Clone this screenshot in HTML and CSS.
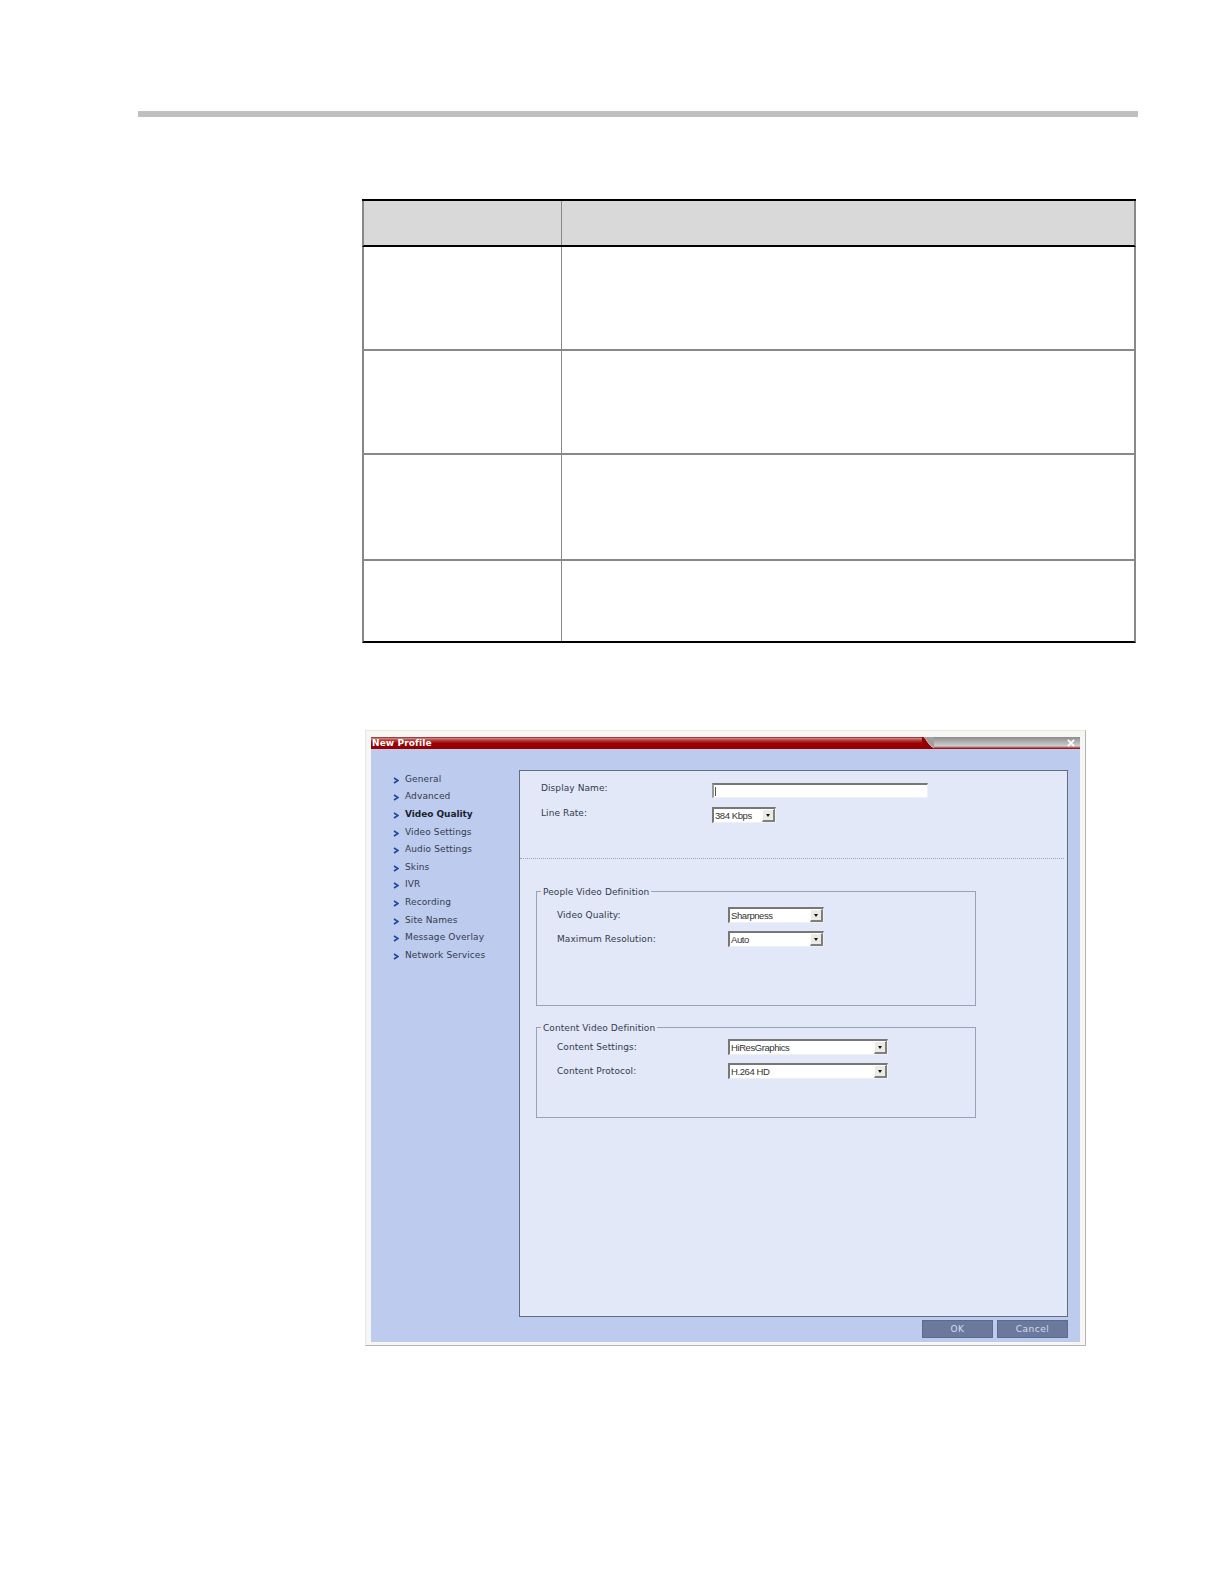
FILE: index.html
```html
<!DOCTYPE html>
<html lang="en">
<head>
<meta charset="utf-8">
<title>New Profile</title>
<link rel="stylesheet" href="styles.css">
</head>
<body>
<div class="rule"></div>
<div class="spec">
  <div class="spec-row spec-head"><div class="spec-a"></div><div class="spec-b"></div></div>
  <div class="spec-row h-104"><div class="spec-a"></div><div class="spec-b"></div></div>
  <div class="spec-row h-104"><div class="spec-a"></div><div class="spec-b"></div></div>
  <div class="spec-row h-106"><div class="spec-a"></div><div class="spec-b"></div></div>
  <div class="spec-row h-82 spec-last"><div class="spec-a"></div><div class="spec-b"></div></div>
</div>
<div class="frame">
  <div class="dialog">
    <div class="titlebar">
      <div class="title-red"><span class="title-text">New Profile</span></div>
      <svg class="title-notch" viewBox="0 0 12 12" preserveAspectRatio="none" aria-hidden="true">
        <path d="M0 0H2C5 3 7 9 12 11V12H0Z" fill="#960000"/>
        <path d="M2 0C5 3 7 9 12 11" stroke="#e3b0b0" stroke-width="1" fill="none"/>
      </svg>
      <div class="title-grey"><svg class="close" viewBox="0 0 9 9" aria-hidden="true"><path d="M1 1L8 8M8 1L1 8" stroke="#fff" stroke-width="2"/></svg></div>
    </div>
    <div class="dialog-body">
      <ul class="nav">
        <li class="nav-item"><svg class="chev" viewBox="0 0 6 7"><path d="M1 1L5 3.5L1 6" stroke="#1a469c" stroke-width="1.6" fill="none"/></svg>General</li>
        <li class="nav-item"><svg class="chev" viewBox="0 0 6 7"><path d="M1 1L5 3.5L1 6" stroke="#1a469c" stroke-width="1.6" fill="none"/></svg>Advanced</li>
        <li class="nav-item nav-active"><svg class="chev" viewBox="0 0 6 7"><path d="M1 1L5 3.5L1 6" stroke="#1a469c" stroke-width="1.6" fill="none"/></svg>Video Quality</li>
        <li class="nav-item"><svg class="chev" viewBox="0 0 6 7"><path d="M1 1L5 3.5L1 6" stroke="#1a469c" stroke-width="1.6" fill="none"/></svg>Video Settings</li>
        <li class="nav-item"><svg class="chev" viewBox="0 0 6 7"><path d="M1 1L5 3.5L1 6" stroke="#1a469c" stroke-width="1.6" fill="none"/></svg>Audio Settings</li>
        <li class="nav-item"><svg class="chev" viewBox="0 0 6 7"><path d="M1 1L5 3.5L1 6" stroke="#1a469c" stroke-width="1.6" fill="none"/></svg>Skins</li>
        <li class="nav-item"><svg class="chev" viewBox="0 0 6 7"><path d="M1 1L5 3.5L1 6" stroke="#1a469c" stroke-width="1.6" fill="none"/></svg>IVR</li>
        <li class="nav-item"><svg class="chev" viewBox="0 0 6 7"><path d="M1 1L5 3.5L1 6" stroke="#1a469c" stroke-width="1.6" fill="none"/></svg>Recording</li>
        <li class="nav-item"><svg class="chev" viewBox="0 0 6 7"><path d="M1 1L5 3.5L1 6" stroke="#1a469c" stroke-width="1.6" fill="none"/></svg>Site Names</li>
        <li class="nav-item"><svg class="chev" viewBox="0 0 6 7"><path d="M1 1L5 3.5L1 6" stroke="#1a469c" stroke-width="1.6" fill="none"/></svg>Message Overlay</li>
        <li class="nav-item"><svg class="chev" viewBox="0 0 6 7"><path d="M1 1L5 3.5L1 6" stroke="#1a469c" stroke-width="1.6" fill="none"/></svg>Network Services</li>
      </ul>
      <div class="main">
        <div class="panel">
          <div class="panel-top">
            <div class="form-row"><span class="label">Display Name:</span><div class="textbox"><span class="caret"></span></div></div>
            <div class="form-row"><span class="label label-low">Line Rate:</span><div class="combo w-64"><span class="combo-text">384 Kbps</span><span class="combo-btn"></span></div></div>
          </div>
          <fieldset class="group group-people">
            <legend class="group-title">People Video Definition</legend>
            <div class="form-row"><span class="label">Video Quality:</span><div class="combo w-96"><span class="combo-text">Sharpness</span><span class="combo-btn"></span></div></div>
            <div class="form-row"><span class="label">Maximum Resolution:</span><div class="combo w-96"><span class="combo-text">Auto</span><span class="combo-btn"></span></div></div>
          </fieldset>
          <fieldset class="group group-content">
            <legend class="group-title">Content Video Definition</legend>
            <div class="form-row"><span class="label">Content Settings:</span><div class="combo w-160"><span class="combo-text">HiResGraphics</span><span class="combo-btn"></span></div></div>
            <div class="form-row"><span class="label">Content Protocol:</span><div class="combo w-160"><span class="combo-text">H.264 HD</span><span class="combo-btn"></span></div></div>
          </fieldset>
        </div>
        <div class="actions">
          <button class="btn" type="button">OK</button>
          <button class="btn" type="button">Cancel</button>
        </div>
      </div>
    </div>
  </div>
</div>
</body>
</html>
```
FILE: styles.css
```css
* { box-sizing: border-box; }
html, body { margin: 0; padding: 0; background: #fff; }
body { height: 1584px; overflow: hidden; font-family: "DejaVu Sans", sans-serif; }

.rule { height: 6px; margin: 111px 86px 0 138px; background: #c0c0c0; }

.spec { width: 774px; margin: 82px 0 0 362px; border-top: 2px solid #000; }
.spec-row { display: flex; border-bottom: 2px solid #888; border-left: 2px solid #888; border-right: 2px solid #888; }
.spec-head { height: 46px; background: #d9d9d9; border-bottom-color: #000; }
.h-104 { height: 104px; }
.h-106 { height: 106px; }
.h-82 { height: 82px; }
.spec-last { border-bottom-color: #000; }
.spec-a { width: 197px; }
.spec-b { flex: 1; border-left: 1px solid #888; }

.frame { width: 721px; height: 616px; margin: 87px 0 0 365px; padding: 6px 5px 3px 5px; background: #f6f6f3; border: 1px solid #e6e6e6; border-right-color: #b4b4b4; border-bottom-color: #b4b4b4; }
.dialog { height: 100%; display: flex; flex-direction: column; background: #bdcbee; }

.titlebar { display: flex; height: 12px; flex: none; }
.title-red { width: 551px; background: linear-gradient(#8e1a1a 0, #c98080 12%, #b33 30%, #960000 55%, #960000 100%); }
.title-text { display: block; padding-left: 1px; font-size: 9px; line-height: 12px; font-weight: 700; letter-spacing: 0.1px; color: #fff; }
.title-notch { width: 12px; height: 12px; background: #a0a0a0; flex: none; }
.title-grey { flex: 1; display: flex; justify-content: flex-end; align-items: center; padding-right: 5px; background: linear-gradient(#8c8c8c, #d0d0d0 75%, #a33 92%, #960000); }
.close { width: 8px; height: 8px; }

.dialog-body { flex: 1; display: flex; min-height: 0; }
.nav { width: 148px; flex: none; margin: 0; padding: 21px 0 0 22px; list-style: none; }
.nav-item { display: flex; align-items: center; height: 17.6px; font-size: 9px; letter-spacing: 0.12px; color: #333a4a; }
.nav-active { font-weight: 700; color: #1a1f2c; letter-spacing: -0.05px; }
.chev { width: 6px; height: 7px; margin: 3px 6px 0 0; flex: none; }

.main { flex: 1; display: flex; flex-direction: column; padding: 21px 12px 0 0; }
.panel { height: 547px; background: #e2e8f8; border: 1px solid #5f6f7c; }
.panel-top { height: 88px; margin-right: 3px; padding: 12px 0 0 21px; display: flex; flex-direction: column; gap: 9px; border-bottom: 1px dotted #99a2b4; }

.form-row { display: flex; align-items: center; height: 15px; }
.panel-top .form-row { align-items: flex-start; }
.label { width: 171px; flex: none; font-size: 9px; line-height: 11px; letter-spacing: 0.08px; color: #333a4a; }
.label-low { padding-top: 1px; }
.textbox { display: flex; align-items: center; width: 216px; height: 15px; padding-left: 1px; background: #fff; border-top: 2px solid #777; border-left: 2px solid #999; border-right: 1px solid #eef0f4; border-bottom: 1px solid #eef0f4; }
.caret { width: 1px; height: 9px; background: #555; }

.combo { display: flex; align-items: stretch; height: 16px; background: #fff; border-top: 2px solid #777; border-left: 2px solid #777; border-right: 1px solid #eef0f4; border-bottom: 1px solid #eef0f4; }
.w-64 { width: 64px; }
.w-96 { width: 96px; }
.w-160 { width: 160px; }
.combo-text { flex: 1; padding-left: 1px; font-family: "Liberation Sans", sans-serif; font-size: 9.5px; line-height: 13px; letter-spacing: -0.42px; color: #333; white-space: nowrap; overflow: hidden; }
.combo-btn { position: relative; width: 13px; flex: none; background: #eceae4; border-top: 1px solid #fff; border-left: 1px solid #fff; border-right: 2px solid #808080; border-bottom: 2px solid #808080; }
.combo-btn::after { content: ""; position: absolute; left: 3px; top: 4px; border-style: solid; border-width: 3px 2.5px 0 2.5px; border-color: #111 transparent transparent transparent; }

.group { margin: 0 0 0 16px; width: 440px; padding: 0 0 0 20px; border: 1px solid #98a2b5; display: flex; flex-direction: column; gap: 8px; }
.group .form-row { height: 16px; }
.group-title { margin-left: -16px; padding: 2px 2px 0; font-size: 9px; line-height: 12px; letter-spacing: 0.08px; color: #333a4a; }
.group-people { height: 122px; margin-top: 25px; padding-top: 9px; }
.group-content { height: 98px; margin-top: 14px; padding-top: 5px; }

.actions { display: flex; justify-content: flex-end; gap: 4px; padding-top: 3px; }
.btn { width: 71px; height: 18px; padding: 0; font-family: "DejaVu Sans", sans-serif; font-size: 9px; letter-spacing: 0.5px; color: #d4dbec; background: #6b7a9c; border: 1px solid #5a6a90; }
```
